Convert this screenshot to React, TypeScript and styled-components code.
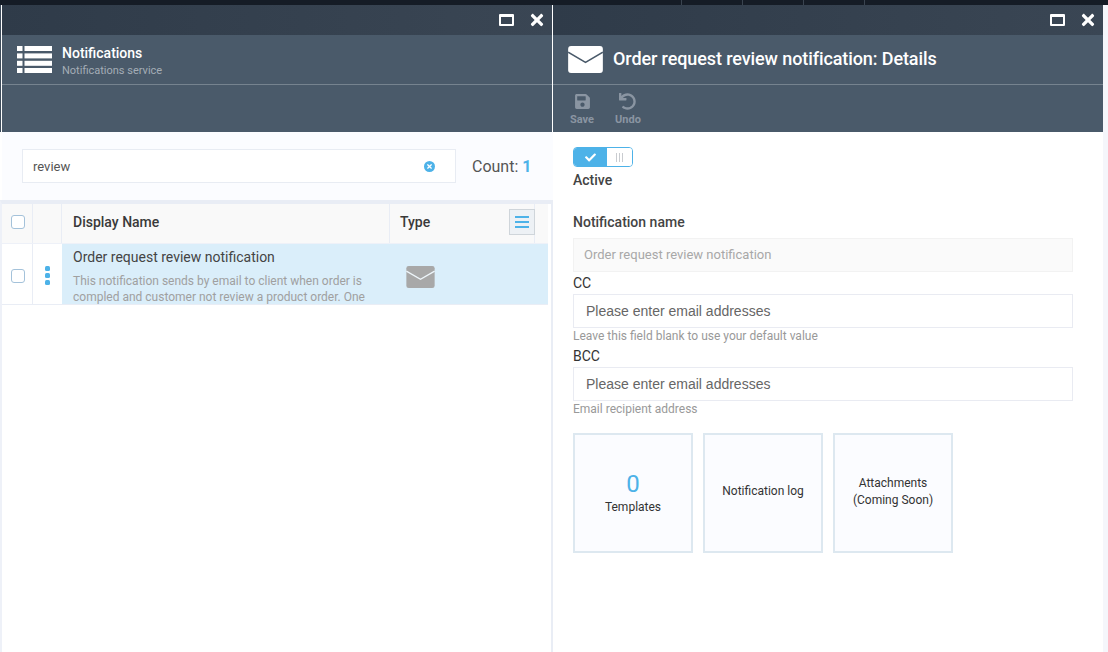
import React from "react";
import styled, { createGlobalStyle } from "styled-components";
import { FaSave, FaUndo, FaCheck, FaTimes } from "react-icons/fa";

const GlobalStyle = createGlobalStyle`
  html, body {
    margin: 0;
    padding: 0;
    background: #f5f6fb;
    font-family: Roboto, "Liberation Sans", sans-serif;
    overflow: hidden;
  }
  * { box-sizing: border-box; }
`;

const Page = styled.div`
  width: 1108px;
  height: 652px;
  display: flex;
  flex-direction: column;
  overflow: hidden;
`;

const TopStrip = styled.div`
  height: 5px;
  flex: none;
  background: #151c26;
  display: flex;
  padding-left: 681px;
`;

const TopTab = styled.div`
  width: 61px;
  border-left: 1px solid #3a4450;
`;

const Blades = styled.div`
  flex: 1;
  display: flex;
  min-height: 0;
`;

const Blade = styled.section<{ $width: number }>`
  width: ${(p) => p.$width}px;
  flex: none;
  display: flex;
  flex-direction: column;
  background: #fff;
`;

const BladeHead = styled.div<{ $edge?: boolean }>`
  height: 127px;
  flex: none;
  display: flex;
  flex-direction: column;
  padding-left: ${(p) => (p.$edge ? 2 : 0)}px;
  border-right: ${(p) => (p.$edge ? "1px solid #fff" : "none")};
  background: linear-gradient(90deg, #3f4d5c 1px, #fff 1px);
`;

const TitleBar = styled.div`
  height: 30px;
  flex: none;
  background: linear-gradient(90deg, #2f3b49, #3a4654);
  display: flex;
  align-items: center;
  justify-content: flex-end;
  gap: 14px;
  padding-right: 6px;
  color: #fff;
`;

const MaxIcon = styled.span`
  width: 15px;
  height: 12px;
  border: 2px solid #fff;
  border-top-width: 3px;
  border-radius: 1px;
`;

const HeadInfo = styled.div`
  height: 50px;
  flex: none;
  background: #4a5a6a;
  border-bottom: 1px solid #76838f;
  display: flex;
  align-items: center;
  gap: 10px;
  padding-left: 15px;
`;

const HeadText = styled.div`
  display: flex;
  flex-direction: column;
  gap: 3px;
  margin-top: 2px;
`;

const HeadTitle = styled.div`
  color: #fff;
  font-size: 14px;
  font-weight: 500;
  line-height: 16px;
`;

const HeadSub = styled.div`
  color: #a4adb6;
  font-size: 11px;
  line-height: 13px;
`;

const DetailTitle = styled.div`
  color: #fff;
  font-size: 18px;
  font-weight: 500;
  line-height: 24px;
  letter-spacing: -0.1px;
  margin-top: -2px;
`;

const Toolbar = styled.div`
  flex: 1;
  background: #4a5a6a;
  display: flex;
  gap: 21px;
  padding: 8px 0 0 17px;
`;

const ToolButton = styled.div`
  display: flex;
  flex-direction: column;
  align-items: center;
  gap: 3px;
  color: #8a95a2;
  font-size: 11px;
  font-weight: 700;
  line-height: 13px;
`;

const SearchBar = styled.div`
  height: 68px;
  flex: none;
  background: #fbfcff;
  display: flex;
  align-items: center;
  padding-left: 20px;
  margin-left: 2px;
`;

const SearchBox = styled.div`
  width: 434px;
  height: 34px;
  flex: none;
  background: #fff;
  border: 1px solid #e8ecf3;
  display: flex;
  align-items: center;
  justify-content: space-between;
  padding: 0 20px 0 10px;
  font-size: 13px;
  color: #555;
`;

const ClearDot = styled.span`
  width: 11px;
  height: 11px;
  border-radius: 50%;
  background: #4db2e8;
  color: #fff;
  display: flex;
  align-items: center;
  justify-content: center;
  font-size: 7px;
`;

const Count = styled.div`
  margin-left: 16px;
  font-size: 16px;
  color: #555;
  white-space: nowrap;
`;

const CountValue = styled.b`
  color: #4db2e8;
  font-weight: 700;
`;

const TableArea = styled.div`
  flex: 1;
  border-top: 4px solid #e9edf5;
  border-left: 2px solid #eef1f8;
  border-right: 2px solid #e9edf5;
  padding-right: 3px;
  background: #fff;
  min-height: 0;
`;

const HeaderRow = styled.div`
  height: 40px;
  display: grid;
  grid-template-columns: 31px 29px 328px 145px 1fr;
  background: #f9f9f9;
  border-bottom: 1px solid #eef1f8;
`;

const HeaderCell = styled.div<{ $inset: number }>`
  display: flex;
  align-items: center;
  justify-content: space-between;
  padding: 0 0 3px ${(p) => p.$inset}px;
  border-right: 1px solid #e9edf5;
  font-size: 14px;
  font-weight: 500;
  color: #3a3a3a;
`;

const CheckCell = styled.div<{ $head?: boolean }>`
  display: flex;
  align-items: center;
  justify-content: center;
  padding: ${(p) => (p.$head ? "0 0 3px 2px" : "3px 0 0 2px")};
  border-right: 1px solid #e9edf5;
`;

const CheckBox = styled.span`
  width: 14px;
  height: 14px;
  border: 1px solid #a4c2da;
  border-radius: 3px;
  background: #fff;
`;

const ColumnButton = styled.div`
  width: 26px;
  height: 26px;
  background: #edf1f5;
  border: 1px solid #cfd5da;
  display: flex;
  flex-direction: column;
  align-items: center;
  justify-content: center;
  gap: 3px;
  margin-right: -1px;
`;

const ColumnBar = styled.span`
  width: 14px;
  height: 2px;
  background: #4db2e8;
`;

const DataRow = styled.div`
  height: 61px;
  display: grid;
  grid-template-columns: 31px 29px 328px 1fr;
  border-bottom: 1px solid #e9edf5;
`;

const KebabCell = styled.div`
  display: flex;
  flex-direction: column;
  align-items: center;
  justify-content: center;
  gap: 2px;
  padding-top: 3px;
`;

const KebabDot = styled.span`
  width: 5px;
  height: 5px;
  border-radius: 1.5px;
  background: #4db2e8;
`;

const NameCell = styled.div`
  background: #daeefa;
  padding: 4px 10px 0 11px;
  overflow: hidden;
`;

const RowTitle = styled.div`
  font-size: 14px;
  color: #444;
  line-height: 18px;
`;

const RowText = styled.div`
  font-size: 12px;
  color: #a0a0a0;
  line-height: 16px;
  margin-top: 7px;
`;

const TypeCell = styled.div`
  background: #daeefa;
  padding: 22px 0 0 16px;
`;

const FormBody = styled.div`
  flex: 1;
  padding: 15px 30px 0 20px;
  background: #fff;
`;

const Toggle = styled.div`
  width: 60px;
  height: 20px;
  display: flex;
  border: 1px solid #4db2e8;
  border-radius: 4px;
  overflow: hidden;
`;

const ToggleOn = styled.div`
  width: 33px;
  background: #4db2e8;
  color: #fff;
  font-size: 11px;
  display: flex;
  align-items: center;
  justify-content: center;
`;

const ToggleKnob = styled.div`
  flex: 1;
  background: #fff;
  display: flex;
  align-items: center;
  justify-content: center;
  gap: 2px;
`;

const KnobBar = styled.span`
  width: 1px;
  height: 9px;
  background: #c9ccd0;
`;

const Label = styled.div<{ $top?: number }>`
  font-size: 14px;
  font-weight: 500;
  line-height: 16px;
  color: #444;
  margin-top: ${(p) => p.$top ?? 0}px;
`;

const PlainLabel = styled(Label)`
  font-weight: 400;
  color: #333;
`;

const DisabledField = styled.div`
  height: 34px;
  margin-top: 8px;
  padding: 0 0 2px 10px;
  display: flex;
  align-items: center;
  background: #fafafa;
  border: 1px solid #f2f2f2;
  font-size: 13px;
  color: #a8a8a8;
`;

const Field = styled.div`
  height: 34px;
  margin-top: 3px;
  padding-left: 12px;
  display: flex;
  align-items: center;
  background: #fff;
  border: 1px solid #e9ebf2;
  font-family: "Liberation Sans", Arial, sans-serif;
  font-size: 14px;
  color: #666;
`;

const Hint = styled.div`
  font-size: 12px;
  line-height: 14px;
  color: #999;
  margin-top: 1px;
`;

const Cards = styled.div`
  display: flex;
  gap: 10px;
  margin-top: 17px;
`;

const Card = styled.div`
  width: 120px;
  height: 120px;
  background: #fbfcff;
  border: 2px solid #dde8f0;
  display: flex;
  flex-direction: column;
  align-items: center;
  justify-content: center;
  text-align: center;
  font-size: 12px;
  line-height: 17px;
  color: #333;
`;

const CardCount = styled.div`
  font-size: 24px;
  line-height: 28px;
  color: #4db2e8;
  margin-top: -1px;
  margin-bottom: 1px;
`;

const CardLabel = styled.div<{ $shift: number }>`
  margin-top: ${(p) => p.$shift}px;
`;

const Envelope = ({ w, h, fill, line }: { w: number; h: number; fill: string; line: string }) => (
  <svg width={w} height={h} viewBox="0 0 36 28" style={{ display: "block", flex: "none" }}>
    <rect x="0" y="0" width="36" height="28" rx="3" fill={fill} />
    <path d="M0 6.5 L18 17 L36 6.5" fill="none" stroke={line} strokeWidth="1.6" />
  </svg>
);

const ListIcon = () => (
  <svg width="35" height="27" viewBox="0 0 35 27" style={{ display: "block", flex: "none" }}>
    {[0, 7.4, 14.8, 22].map((y) => (
      <g key={y} fill="#fff">
        <rect x="0" y={y} width="5.5" height="5" />
        <rect x="7.5" y={y} width="27.5" height="5" />
      </g>
    ))}
  </svg>
);

const BladeTitleBar = () => (
  <TitleBar>
    <MaxIcon />
    <FaTimes size={18} />
  </TitleBar>
);

export default function App() {
  return (
    <Page>
      <GlobalStyle />
      <TopStrip>
        <TopTab />
        <TopTab />
        <TopTab />
        <TopTab />
      </TopStrip>
      <Blades>
        <Blade $width={553}>
          <BladeHead $edge>
            <BladeTitleBar />
            <HeadInfo>
              <ListIcon />
              <HeadText>
                <HeadTitle>Notifications</HeadTitle>
                <HeadSub>Notifications service</HeadSub>
              </HeadText>
            </HeadInfo>
            <Toolbar />
          </BladeHead>
          <SearchBar>
            <SearchBox>
              review
              <ClearDot>
                <FaTimes />
              </ClearDot>
            </SearchBox>
            <Count>
              Count: <CountValue>1</CountValue>
            </Count>
          </SearchBar>
          <TableArea>
            <HeaderRow>
              <CheckCell $head>
                <CheckBox />
              </CheckCell>
              <CheckCell />
              <HeaderCell $inset={11}>Display Name</HeaderCell>
              <HeaderCell $inset={10}>
                Type
                <ColumnButton>
                  <ColumnBar />
                  <ColumnBar />
                  <ColumnBar />
                </ColumnButton>
              </HeaderCell>
              <div />
            </HeaderRow>
            <DataRow>
              <CheckCell>
                <CheckBox />
              </CheckCell>
              <KebabCell>
                <KebabDot />
                <KebabDot />
                <KebabDot />
              </KebabCell>
              <NameCell>
                <RowTitle>Order request review notification</RowTitle>
                <RowText>
                  This notification sends by email to client when order is compled and customer not
                  review a product order. One
                </RowText>
              </NameCell>
              <TypeCell>
                <Envelope w={29} h={22} fill="#a8a8a8" line="#eef6fb" />
              </TypeCell>
            </DataRow>
          </TableArea>
        </Blade>
        <Blade $width={550}>
          <BladeHead>
            <BladeTitleBar />
            <HeadInfo>
              <Envelope w={35} h={27} fill="#fff" line="#4a5a6a" />
              <DetailTitle>Order request review notification: Details</DetailTitle>
            </HeadInfo>
            <Toolbar>
              <ToolButton>
                <FaSave size={17} />
                Save
              </ToolButton>
              <ToolButton>
                <FaUndo size={17} />
                Undo
              </ToolButton>
            </Toolbar>
          </BladeHead>
          <FormBody>
            <Toggle>
              <ToggleOn>
                <FaCheck />
              </ToggleOn>
              <ToggleKnob>
                <KnobBar />
                <KnobBar />
                <KnobBar />
              </ToggleKnob>
            </Toggle>
            <Label $top={5}>Active</Label>
            <Label $top={26}>Notification name</Label>
            <DisabledField>Order request review notification</DisabledField>
            <PlainLabel $top={3}>CC</PlainLabel>
            <Field>Please enter email addresses</Field>
            <Hint>Leave this field blank to use your default value</Hint>
            <PlainLabel $top={5}>BCC</PlainLabel>
            <Field>Please enter email addresses</Field>
            <Hint>Email recipient address</Hint>
            <Cards>
              <Card>
                <CardCount>0</CardCount>
                Templates
              </Card>
              <Card>
                <CardLabel $shift={-4}>Notification log</CardLabel>
              </Card>
              <Card>
                <CardLabel $shift={-2}>
                  Attachments
                  <br />
                  (Coming Soon)
                </CardLabel>
              </Card>
            </Cards>
          </FormBody>
        </Blade>
      </Blades>
    </Page>
  );
}
